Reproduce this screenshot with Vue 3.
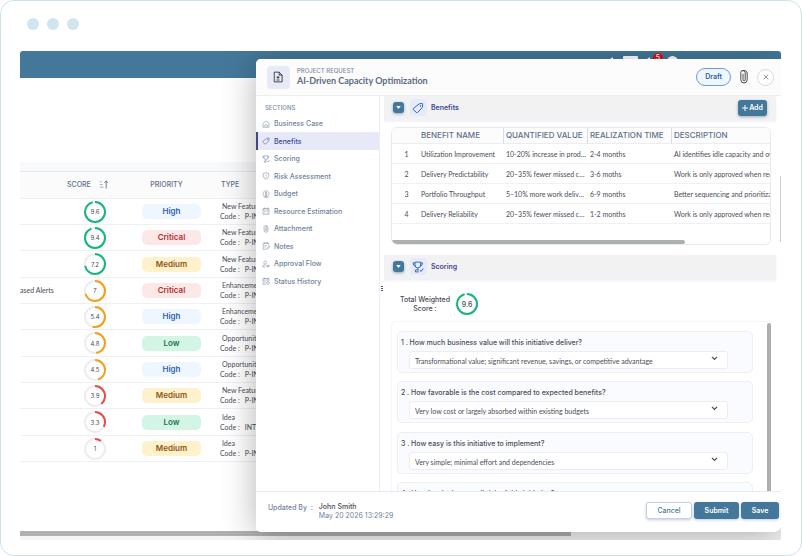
<script setup>
import { ref } from 'vue'

const projects = [
  { name: '', score: 9.6, tone: 'good', priority: 'High', type: 'New Feature', code: 'P-INT-014' },
  { name: '', score: 9.4, tone: 'good', priority: 'Critical', type: 'New Feature', code: 'P-INT-009' },
  { name: '', score: 7.2, tone: 'good', priority: 'Medium', type: 'New Feature', code: 'P-INT-011' },
  { name: 'ased Alerts', score: 7, tone: 'fair', priority: 'Critical', type: 'Enhancement', code: 'P-INT-007' },
  { name: '', score: 5.4, tone: 'fair', priority: 'High', type: 'Enhancement', code: 'P-INT-012' },
  { name: '', score: 4.8, tone: 'fair', priority: 'Low', type: 'Opportunity', code: 'P-INT-003' },
  { name: '', score: 4.5, tone: 'fair', priority: 'High', type: 'Opportunity', code: 'P-INT-005' },
  { name: '', score: 3.9, tone: 'poor', priority: 'Medium', type: 'New Feature', code: 'P-INT-008' },
  { name: '', score: 3.3, tone: 'poor', priority: 'Low', type: 'Idea', code: 'INT-002' },
  { name: '', score: 1, tone: 'poor', priority: 'Medium', type: 'Idea', code: 'P-INT-001' },
]

const icons = {
  home: 'M2 7 8 2l6 5v7.5H2zM5.5 14v-2.500a2.500 2.500 0 0 1 5 0V14',
  tag: 'M9.500 2.500 13.500 2q1 0 .8 1l-.6 4.500-6 6.300q-1 .9-2 0L2 10.500q-.9-1 0-2zM11 5h.8v.8H11z',
  trophy: 'M4 1.500h7.500v4a3.700 3.700 0 0 1-7.500 0zM4 2.500H1.500q0 4 3 4.500M11.500 2.500H14q0 4-3 4.500M7.700 9.500V12M4.500 14.500V12H9M4.500 14.500H9M10.500 12l1.500 2 3-4',
  shield: 'M8 1.500 13.500 3v5q0 4-5.500 6.500Q2.500 12 2.500 8V3zM8 5v3.500M8 10.500v1',
  coin: 'M8 1.500a6 6 0 1 0 .1 0zM10 5.500Q8 4 6.500 5.500T8 8t1.500 2.500T6 10.500M8 3.500v9M3 14.500h10',
  calendar: 'M2 3h12v11.500H2zM5 1v3M11 1v3M2 6h12M4.500 9h2M9.500 9h2M4.500 12h2M9.500 12h2',
  clip: 'M12 4v6.500a4 4 0 0 1-8 0V4a2.700 2.700 0 0 1 5.500 0v6.500a1.400 1.400 0 0 1-2.800 0V5M7 1.500h3l2 2.500',
  note: 'M13.500 7V2h-11v12.500H8M5 1v3M8 1v3M11 1v3M5 7h5M5 10h3M9.500 14.500l.5-2.500 4-4 1.500 1.500-4 4z',
  person: 'M6.500 2a3 3 0 1 0 .1 0zM1.500 14v-1.500q0-3 4-3H8M1.500 14H7M9 11h5.500l-2-2M15 13H9.500l2 2',
  history: 'M7 14.500H2V3h12v4M5 1v3M11 1v3M2 6h12M11.500 9a3 3 0 1 0 .1 0zM11.500 10.500V12l1 .5M4.500 9h2M4.500 12h2',
}

const sections = [
  { label: 'Business Case', icon: 'home' },
  { label: 'Benefits', icon: 'tag' },
  { label: 'Scoring', icon: 'trophy' },
  { label: 'Risk Assessment', icon: 'shield' },
  { label: 'Budget', icon: 'coin' },
  { label: 'Resource Estimation', icon: 'calendar' },
  { label: 'Attachment', icon: 'clip' },
  { label: 'Notes', icon: 'note' },
  { label: 'Approval Flow', icon: 'person' },
  { label: 'Status History', icon: 'history' },
]
const active = ref('Benefits')

const benefits = [
  { name: 'Utilization Improvement', value: '10-20% increase in productive use', time: '2-4 months', text: 'AI identifies idle capacity and overload' },
  { name: 'Delivery Predictability', value: '20–35% fewer missed commitments', time: '3-6 moths', text: 'Work is only approved when required' },
  { name: 'Portfolio Throughput', value: '5–10% more work delivered yearly', time: '6-9 months', text: 'Better sequencing and prioritization' },
  { name: 'Delivery Reliability', value: '20–35% fewer missed commitments', time: '1-2 months', text: 'Work is only approved when required' },
]

const questions = [
  { text: 'How much business value will this initiative deliver?', answer: 'Transformational value; significant revenue, savings, or competitive advantage' },
  { text: 'How favorable is the cost compared to expected benefits?', answer: 'Very low cost or largely absorbed within existing budgets' },
  { text: 'How easy is this initiative to implement?', answer: 'Very simple; minimal effort and dependencies' },
  { text: 'How low is the overall risk of this initiative?', answer: 'Very low risk' },
]
</script>

<template>
  <div class="frame">
    <div class="dots"><i></i><i></i><i></i></div>

    <div class="screen">
      <header class="topbar">
        <svg class="tb-bell" viewBox="0 0 4 12"><path d="M0 2 3 0v12H0z" /></svg>
        <span class="tb-card"></span>
        <svg class="tb-bell tb-ring" viewBox="0 0 4 12"><path d="M0 2 3 0v12H0z" /></svg>
        <span class="tb-alert"><b>5</b></span>
        <span class="tb-avatar"></span>
      </header>

      <main class="list">
        <div class="strip"></div>
        <table class="projects">
          <colgroup><col class="c-name" /><col class="c-score" /><col class="c-prio" /><col /></colgroup>
          <thead>
            <tr>
              <th></th>
              <th>
                <span class="sort">SCORE
                  <svg viewBox="0 0 10 10"><path d="M1 2h2M1 5h3M1 8h4" class="faint" /><path d="M8 9.500V1M6 3l2-2 2 2" /></svg>
                </span>
              </th>
              <th class="prio">PRIORITY</th>
              <th class="left">TYPE</th>
            </tr>
          </thead>
          <tbody>
            <tr v-for="p in projects" :key="p.code">
              <td class="name">{{ p.name }}</td>
              <td>
                <div class="ring" :class="p.tone">
                  <svg viewBox="0 0 22 22">
                    <circle cx="11" cy="11" r="10" />
                    <circle class="arc" cx="11" cy="11" r="10" pathLength="10" :stroke-dasharray="p.score + ' 10'" />
                  </svg>
                  <span>{{ p.score }}</span>
                </div>
              </td>
              <td><span class="pill" :class="p.priority.toLowerCase()">{{ p.priority }}</span></td>
              <td class="type">
                <div class="kind">{{ p.type }}</div>
                <div class="code"><span>Code :</span><span>{{ p.code }}</span></div>
              </td>
            </tr>
          </tbody>
        </table>
      </main>
      <div class="page-scroll"><i></i></div>

      <section class="drawer" role="dialog" aria-labelledby="title">
        <header class="d-head">
          <span class="doc">
            <svg viewBox="0 0 16 16"><path d="M3 1.500h6.500l4 4v9H3zM9.500 1.500v4h4M8 6.500v4M6 8.500h4M6 12h4" /></svg>
          </span>
          <div class="titles">
            <small>PROJECT REQUEST</small>
            <h1 id="title">AI-Driven Capacity Optimization</h1>
          </div>
          <span class="draft">Draft</span>
          <button class="clipbtn" aria-label="Attachments">
            <svg viewBox="0 0 10 18"><path d="M9 4.500v8a4 4 0 0 1-8 0v-9a2.700 2.700 0 0 1 5.500 0v9a1.300 1.300 0 0 1-2.700 0V5M3 1.200h4Q9 2 9 5" /></svg>
          </button>
          <button class="close" aria-label="Close">
            <svg viewBox="0 0 8 8"><path d="m1 1 6 6M7 1 1 7" /></svg>
          </button>
        </header>

        <div class="d-body">
          <nav class="side" aria-label="Sections">
            <h2>SECTIONS</h2>
            <a v-for="s in sections" :key="s.label" href="#" :class="{ on: s.label === active }" @click.prevent="active = s.label">
              <svg viewBox="0 0 16 16"><path :d="icons[s.icon]" /></svg>{{ s.label }}
            </a>
          </nav>
          <div class="grip"><i></i><i></i><i></i></div>

          <div class="content">
            <div class="sec-head">
              <button class="toggle" aria-label="Collapse Benefits"><svg viewBox="0 0 6 4"><path d="M0 0h6L3 4z" /></svg></button>
              <span class="sec-icon"><svg viewBox="0 0 16 16"><path :d="icons.tag" /></svg></span>
              <h3>Benefits</h3>
              <button class="add"><svg viewBox="0 0 8 8"><path d="M4 0v8M0 4h8" /></svg>Add</button>
            </div>

            <div class="b-wrap">
              <table class="benefits">
                <colgroup><col class="b-no" /><col class="b-name" /><col class="b-value" /><col class="b-time" /><col /></colgroup>
                <thead>
                  <tr><th></th><th>BENEFIT NAME</th><th class="line">QUANTIFIED VALUE</th><th class="line">REALIZATION TIME</th><th class="line">DESCRIPTION</th></tr>
                </thead>
                <tbody>
                  <tr v-for="(b, i) in benefits" :key="b.name">
                    <td class="no">{{ i + 1 }}</td><td>{{ b.name }}</td><td>{{ b.value }}</td><td>{{ b.time }}</td><td class="clip">{{ b.text }}</td>
                  </tr>
                </tbody>
              </table>
              <div class="b-scroll"></div>
            </div>

            <div class="sec-head second">
              <button class="toggle" aria-label="Collapse Scoring"><svg viewBox="0 0 6 4"><path d="M0 0h6L3 4z" /></svg></button>
              <span class="sec-icon"><svg viewBox="0 0 16 16"><path :d="icons.trophy" /></svg></span>
              <h3>Scoring</h3>
            </div>

            <div class="total">
              <p>Total Weighted<br />Score :</p>
              <div class="ring good">
                <svg viewBox="0 0 22 22">
                  <circle cx="11" cy="11" r="10" />
                  <circle class="arc" cx="11" cy="11" r="10" pathLength="10" stroke-dasharray="9.600 10" />
                </svg>
                <span>9.6</span>
              </div>
            </div>

            <div class="q-box">
              <div class="q-list">
                <div v-for="(q, i) in questions" :key="i" class="q">
                  <label :for="'q' + i">{{ i + 1 }} . {{ q.text }}</label>
                  <div class="pick">
                    <select :id="'q' + i"><option>{{ q.answer }}</option></select>
                    <svg viewBox="0 0 8 6"><path d="m1 1 3 3 3-3" /></svg>
                  </div>
                </div>
              </div>
              <div class="q-scroll"></div>
            </div>
            <div class="c-scroll"></div>
          </div>
        </div>

        <footer class="d-foot">
          <span class="by">Updated By&nbsp; :</span>
          <div class="who"><b>John Smith</b><time>May 20 2026 13:29:29</time></div>
          <button class="btn ghost">Cancel</button>
          <button class="btn wide">Submit</button>
          <button class="btn">Save</button>
        </footer>
      </section>
    </div>
  </div>
</template>

<style>
body { background: #fff; }
</style>

<style scoped>
* { box-sizing: border-box; }
.frame {
  min-height: 100vh; display: flex; flex-direction: column; padding: 17px 20px 15px 19px;
  border: 1px solid #cde3ea; border-radius: 14px; background: #fff; color: #4a4d57;
  font-family: Inter, "Liberation Sans", sans-serif; font-size: 7px; line-height: 9px;
}
h1, h2, h3, p { margin: 0; }
button { font: inherit; padding: 0; border: 0; cursor: pointer; }
svg { display: block; fill: none; stroke: currentColor; stroke-width: 1; overflow: visible; }
.dots { display: flex; gap: 8px; padding-left: 7px; height: 33px; }
.dots i { width: 12px; height: 12px; border-radius: 50%; background: #d0e6ec; }
.screen { position: relative; flex: 1; display: flex; flex-direction: column; overflow: hidden; border-radius: 3px 3px 0 0; }

.topbar { height: 27px; background: #44789a; display: flex; justify-content: flex-end; padding: 2px 103px 0 0; color: #fff; }
.tb-bell { width: 4px; height: 12px; fill: #fff; stroke: none; margin: 4px 9px 0 0; }
.tb-ring { margin-right: 2px; }
.tb-card { width: 15px; height: 12px; background: #fff; border-radius: 1px; margin: 3px 9px 0 0; }
.tb-alert b { display: block; width: 10px; height: 10px; border-radius: 50%; background: #e60d0d; text-align: center; line-height: 9px; font-weight: 500; }
.tb-avatar { width: 11px; height: 11px; border-radius: 50%; background: #fff; margin: 3px 0 0 4px; }

.list { flex: 1; padding-top: 84px; }
.strip { height: 10px; background: #f8f9fb; border-bottom: 1px solid #e6e8f1; }
.projects { width: 100%; table-layout: fixed; border-collapse: separate; border-spacing: 0; }
.c-name { width: 38px; } .c-score { width: 74px; } .c-prio { width: 79px; }
.projects th { height: 27px; padding: 0 0 2px; background: #fbfbfc; border-bottom: 1px solid #eef0f5; font-weight: 500; color: #5f7088; }
.projects th.left { text-align: left; padding-left: 10px; }
.projects th.prio { padding-right: 10px; }
.sort { display: flex; align-items: center; gap: 8px; padding-left: 9px; }
.sort svg { width: 9px; height: 9px; } .faint { opacity: .6; }
.projects td { height: 26px; padding: 0; border-bottom: 1px solid #eef0f5; overflow: hidden; white-space: nowrap; }
.projects tr:nth-child(3n) td { height: 27px; }
.projects td.name, .projects td.type, .benefits td, .pick select { font-family: Lato, "Liberation Sans", sans-serif; }
.ring { position: relative; width: 22px; height: 22px; margin: 0 auto; display: grid; place-items: center; font-size: 6px; }
.ring svg { position: absolute; inset: 0; transform: rotate(-90deg); }
.ring circle { stroke: #ededed; stroke-width: 2; }
.ring.good .arc { stroke: #16b67f; } .ring.fair .arc { stroke: #f59e1b; } .ring.poor .arc { stroke: #ea4a48; }
.pill { display: block; width: 59px; height: 15px; line-height: 15px; margin: 0 auto; border-radius: 5px; text-align: center; font-size: 8px; font-weight: 600; }
.pill.high { background: #eef6ff; color: #2f5fb5; }
.pill.critical { background: #fde8e8; color: #b12f30; }
.pill.medium { background: #fff1cb; color: #8f5716; }
.pill.low { background: #d2f5e4; color: #246e52; }
.projects td.type { padding-left: 9px; }
.kind { padding-left: 2px; } .code { display: flex; gap: 5px; margin-top: 1px; }
.page-scroll { height: 9px; background: #f5f5f5; }
.page-scroll i { display: block; width: 551px; height: 5px; background: #b0b0b0; }

.drawer {
  position: absolute; top: 8px; bottom: 8px; right: 0; width: 69%; display: flex; flex-direction: column;
  background: #fff; border-radius: 5px 0 8px 5px; box-shadow: 0 4px 34px rgba(0, 0, 0, .3); overflow: hidden;
}
.d-head { flex: none; height: 37px; display: flex; align-items: center; padding: 0 7px 0 11px; background: #fcfcfc; border-bottom: 1px solid #eee; }
.doc { width: 23px; height: 23px; border-radius: 4px; background: #e9eaf7; display: grid; place-items: center; color: #33363f; }
.doc svg { width: 12px; height: 12px; stroke-width: 1.200; }
.titles { flex: 1; padding-left: 7px; }
.titles small { display: block; font-size: 6px; line-height: 8px; color: #7c8ba3; font-weight: 500; }
.titles h1 { font-family: Lato, "Liberation Sans", sans-serif; font-size: 9px; line-height: 12px; font-weight: 700; color: #5b6b82; }
.draft { height: 18px; line-height: 16px; padding: 0 8px; border: 1px solid #6f9ad6; border-radius: 9px; background: #eef6ff; color: #2d5ea8; font-weight: 600; }
.clipbtn { background: none; margin: 0 9px; color: #444; } .clipbtn svg { width: 8px; height: 16px; stroke-width: 1.200; }
.close { width: 17px; height: 17px; border-radius: 50%; border: 1px solid #d8d8d8; background: #fff; display: grid; place-items: center; color: #777; }
.close svg { width: 6px; height: 6px; }

.d-body { flex: 1; min-height: 0; display: flex; }
.side { flex: none; width: 124px; border-right: 1px solid #ececf3; }
.side h2 { font-size: 6px; line-height: 8px; padding: 8px 0 3px 9px; height: 19px; font-weight: 500; color: #7c8ba3; }
.side a { height: 18px; display: flex; align-items: center; gap: 4px; padding-left: 6px; color: #71829b; text-decoration: none; font-weight: 500; }
.side a:nth-of-type(odd) { height: 17px; }
.side a svg { width: 8px; height: 8px; stroke-width: 1.200; opacity: .85; }
.side a.on { background: #e8e9f8; border-left: 2px solid #3f4699; padding-left: 4px; color: #3b4a9b; }
.grip { width: 4px; display: flex; flex-direction: column; gap: 1px; padding: 190px 0 0 1px; }
.grip i { width: 2px; height: 1px; background: #3f5f86; }

.content { flex: 1; min-width: 0; position: relative; overflow: hidden; }
.sec-head { height: 24px; margin-right: 5px; display: flex; align-items: center; padding: 0 9px 1px; background: #f2f2f3; box-shadow: 0 2px 2px #f1f1fb; }
.toggle { width: 11px; height: 11px; border-radius: 3px; background: #44789a; box-shadow: 0 1px 3px #8aa6ba; display: grid; place-items: center; }
.toggle svg { width: 5px; height: 3px; fill: #fff; stroke: none; }
.sec-icon { width: 17px; height: 17px; margin: 0 4px 0 6px; border-radius: 3px; background: #e6ebfa; display: grid; place-items: center; color: #3565b5; }
.sec-icon svg { width: 12px; height: 12px; stroke-width: 1.300; }
.sec-head h3 { flex: 1; font-size: 7px; font-weight: 600; color: #3f4699; }
.add { width: 29px; height: 16px; border-radius: 3px; background: #44789a; color: #fff; font-weight: 600; display: flex; align-items: center; justify-content: center; gap: 1px; box-shadow: 0 1px 3px #9ab; }
.add svg { width: 6px; height: 6px; stroke-width: 1.300; }

.b-wrap { margin: 7px 10px 0 7px; height: 118px; border: 1px solid #e9e9f1; border-radius: 6px; overflow: hidden; display: flex; flex-direction: column; }
.benefits { width: 100%; table-layout: fixed; border-collapse: separate; border-spacing: 0; }
.b-no { width: 26px; } .b-name { width: 85px; } .b-value { width: 84px; } .b-time { width: 84px; }
.benefits th { height: 16px; padding: 0 0 0 3px; text-align: left; white-space: nowrap; font-size: 8px; font-weight: 500; color: #5f7088; background: #fcfcfd; border-bottom: 1px solid #ececf4; }
.benefits th.line { border-left: 1px solid #d9dce4; padding-left: 2px; }
.benefits td { height: 20px; padding: 2px 0 0 3px; border-bottom: 1px solid #f0f0f5; overflow: hidden; white-space: nowrap; text-overflow: ellipsis; }
.benefits td.clip { text-overflow: clip; } .benefits td.no { text-align: center; }
.b-scroll { margin-top: auto; width: 293px; height: 4px; background: #adb0b0; border-radius: 0 2px 2px 0; }

.second { margin-top: 10px; }
.total { display: flex; align-items: center; gap: 6px; padding: 14px 0 0 16px; font-weight: 500; }
.total p { text-align: center; }
.total .ring { margin: 0; font-size: 7px; }
.q-box { margin: 6px 10px 0 7px; height: 300px; display: flex; border: 1px solid #f6f6fa; border-right: 0; border-radius: 6px 0 0 0; }
.q-list { flex: 1; padding: 9px 14px 0 5px; display: flex; flex-direction: column; gap: 8px; }
.q { height: 42px; flex: none; border: 1px solid #eeeff6; border-radius: 5px; background: #fafbfe; padding: 6px 24px 0 3px; font-weight: 500; }
.q:nth-child(even) { margin-bottom: 1px; }
.pick { position: relative; margin: 4px 0 0 8px; font-weight: 400; }
.pick select { display: block; width: 100%; height: 18px; appearance: none; border: 1px solid #ececf2; border-radius: 3px; background: #fff; font-size: 7px; line-height: 9px; color: inherit; padding: 2px 20px 0 5px; }
.pick svg { position: absolute; right: 10px; top: 5px; width: 7px; height: 5px; stroke-width: 1.500; pointer-events: none; }
.q-scroll { width: 4px; margin-top: 1px; background: #b0b0b0; border-radius: 2px 2px 0 0; }
.c-scroll { position: absolute; right: 0; top: 80px; width: 1px; height: 66px; background: #cfcfcf; }

.d-foot { flex: none; height: 41px; display: flex; align-items: center; padding: 0 2px 4px 12px; border-top: 1px solid #e9e9f1; background: #fff; }
.by { font-weight: 500; color: #71829b; align-self: flex-start; padding-top: 11px; }
.who { flex: 1; padding: 2px 0 0 6px; } .who b { display: block; font-weight: 500; } .who time { display: block; color: #71829b; }
.btn { width: 38px; height: 17px; margin-left: 2px; border-radius: 3px; background: #44789a; color: #fff; font-weight: 600; box-shadow: 0 1px 3px #c3cbe4; }
.btn.wide { width: 45px; }
.btn.ghost { width: 46px; background: #fff; border: 1px solid #c4d3e0; color: #44789a; font-weight: 500; }
</style>
